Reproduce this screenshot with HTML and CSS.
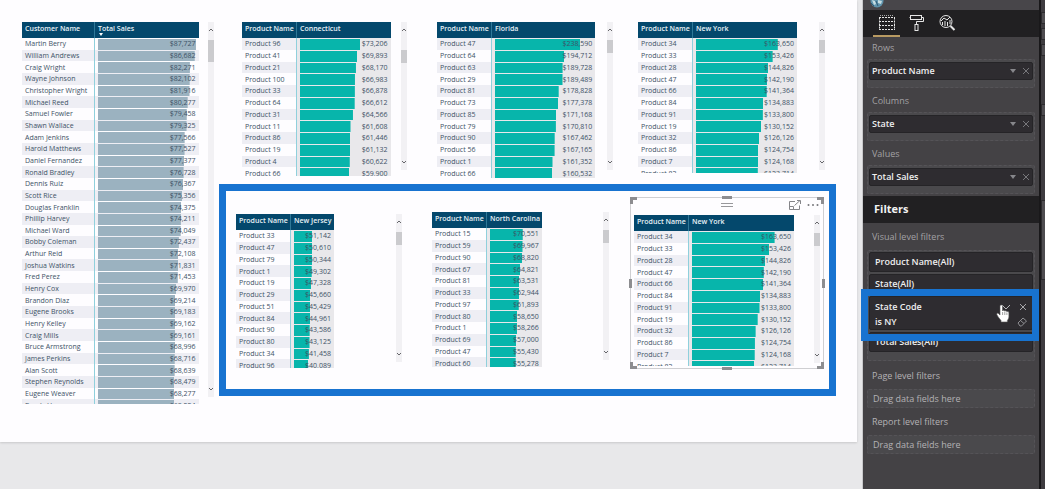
FILE: index.html
```html
<!DOCTYPE html>
<html lang="en">
<head>
<meta charset="utf-8">
<title>Sales report</title>
<link rel="stylesheet" href="styles.css">
</head>
<body>
<main class="report">
  <div class="canvas">
    <section class="visual visual-customers" data-visual="customers"></section>
    <div class="states">
      <div class="state-row state-row-top">
        <section class="visual visual-ct" data-visual="connecticut"></section>
        <section class="visual visual-fl" data-visual="florida"></section>
        <section class="visual visual-ny" data-visual="newYork"></section>
      </div>
      <div class="state-row state-row-marked">
        <section class="visual visual-nj" data-visual="newJersey"></section>
        <section class="visual visual-nc" data-visual="northCarolina"></section>
        <div class="selected">
          <i class="handle h-tl"></i><i class="handle h-tc"></i><i class="handle h-tr"></i>
          <i class="handle h-ml"></i><i class="handle h-mr"></i>
          <i class="handle h-bl"></i><i class="handle h-bc"></i><i class="handle h-br"></i>
          <div class="selected-bar">
            <i class="grip"></i>
            <button class="icon-button" aria-label="Focus mode"><svg width="12" height="10" viewBox="0 0 12 10" fill="none" stroke="#858589"><path d="M6 1.500H.5v8h10V5.500M.5 6.500h4v3M5.500 5.500l5.500-5M8 .5h3.500V4"/></svg></button>
            <button class="icon-button" aria-label="More options"><svg width="12" height="10" viewBox="0 0 12 10" fill="#77777b"><circle cx="1.500" cy="5" r="1"/><circle cx="6" cy="5" r="1"/><circle cx="10.500" cy="5" r="1"/></svg></button>
          </div>
          <section class="visual visual-ny2" data-visual="newYork"></section>
        </div>
      </div>
    </div>
  </div>
</main>

<aside class="pane">
  <div class="pane-top">
    <svg width="18" height="10" viewBox="0 0 18 10"><circle cx="9" cy="1" r="6.500" fill="#5f93ac"/><path d="M4 0l3 1 1 3-2 1zM10 0l4 1-1 3-3-1z" fill="#c7dde2"/><path d="M3 3l3 3M8 1l2 5" stroke="#2d5b78"/></svg>
  </div>
  <nav class="tabs">
    <button class="tab tab-active" aria-label="Fields"><svg width="18" height="18" viewBox="0 0 18 18" fill="none" stroke="#e6e6e6"><path d="M1.500 3.500v12M16.500 3.500v12M1 3.500h16M1 7.500h16M1 11.500h16M1 15.500h16" stroke-dasharray="2 1"/><path d="M2 1.500h13" stroke="#aaa" stroke-dasharray="1 1"/></svg></button>
    <button class="tab" aria-label="Format"><svg width="18" height="18" viewBox="0 0 18 18" fill="none" stroke="#e6e6e6"><rect x="2.500" y="1.500" width="11" height="4"/><path d="M13.500 3.500h2v4H8.500v3M2.500 3.500h-1"/><rect x="7" y="10.500" width="3" height="6"/></svg></button>
    <button class="tab" aria-label="Analytics"><svg width="18" height="18" viewBox="0 0 18 18" fill="none" stroke="#e6e6e6"><circle cx="8" cy="7.500" r="6"/><path d="M12.500 12l4 4" stroke-width="2"/><path d="M4.500 8v3M7 7v5M9.500 8v4M12 6v4M3 7l3-3 3 2 3-3"/></svg></button>
  </nav>

  <h3 class="label">Rows</h3>
  <div class="well"><div class="field"><span>Product Name</span><button class="icon-button" aria-label="Product Name options"><svg width="8" height="6" viewBox="0 0 8 6"><path d="M1 1h6L4 5z" fill="#87878b"/></svg></button><button class="icon-button" aria-label="Remove Product Name"><svg width="8" height="8" viewBox="0 0 8 8" stroke="#77777b"><path d="M1 1l6 6M7 1L1 7"/></svg></button></div></div>
  <h3 class="label">Columns</h3>
  <div class="well"><div class="field"><span>State</span><button class="icon-button" aria-label="State options"><svg width="8" height="6" viewBox="0 0 8 6"><path d="M1 1h6L4 5z" fill="#87878b"/></svg></button><button class="icon-button" aria-label="Remove State"><svg width="8" height="8" viewBox="0 0 8 8" stroke="#77777b"><path d="M1 1l6 6M7 1L1 7"/></svg></button></div></div>
  <h3 class="label">Values</h3>
  <div class="well"><div class="field"><span>Total Sales</span><button class="icon-button" aria-label="Total Sales options"><svg width="8" height="6" viewBox="0 0 8 6"><path d="M1 1h6L4 5z" fill="#87878b"/></svg></button><button class="icon-button" aria-label="Remove Total Sales"><svg width="8" height="8" viewBox="0 0 8 8" stroke="#77777b"><path d="M1 1l6 6M7 1L1 7"/></svg></button></div></div>

  <h2 class="band">Filters</h2>
  <h3 class="label">Visual level filters</h3>
  <div class="well well-filters">
    <div class="field field-filter">Product Name(All)</div>
    <div class="field field-filter">State(All)</div>
    <div class="field field-open">
      <div class="filter-line"><span>State Code</span><button class="icon-button" aria-label="Expand State Code"><svg width="10" height="8" viewBox="0 0 10 8" fill="none" stroke="#b5b5b8"><path d="M1 2l4 4 4-4"/></svg></button><button class="icon-button" aria-label="Remove State Code"><svg width="8" height="8" viewBox="0 0 8 8" stroke="#a5a5a8"><path d="M1 1l6 6M7 1L1 7"/></svg></button></div>
      <div class="filter-line"><span>is NY</span><button class="icon-button" aria-label="Clear filter"><svg width="10" height="10" viewBox="0 0 10 10" fill="none" stroke="#8f8f93"><path d="M1 6l5-5 3.500 3L4.500 9H3zM3.500 3.500l3.500 3"/></svg></button></div>
      <i class="marker"></i>
      <svg class="cursor" width="14" height="19" viewBox="0 0 14 19"><path d="M4 2c0-1.500 2.500-1.500 2.500 0v5c.5-1 2-.8 2.300.2.600-.8 1.900-.5 2.100.5.700-.7 2-.2 2 1V13c0 1.500-1 2.500-1.500 3.500v1.500H5v-1.500C4 15 1.500 12.500.8 10.500c-.3-1.400 1.200-1.800 2-.8L4 11z" fill="#fff" stroke="#555" stroke-width=".6"/><path d="M6.600 8v3M8.800 8v3M10.900 8.500V11" stroke="#777" stroke-width=".7"/></svg>
    </div>
    <div class="field field-filter">Total Sales(All)</div>
  </div>
  <h3 class="label label-low">Page level filters</h3>
  <div class="drop">Drag data fields here</div>
  <h3 class="label label-low">Report level filters</h3>
  <div class="drop">Drag data fields here</div>
</aside>
<div class="next-pane"><i></i><i></i><i></i><i></i><i></i></div>
<script src="script.js"></script>
</body>
</html>
```

FILE: styles.css
```css
* { box-sizing: border-box; }
body {
  margin: 0;
  min-height: 100vh;
  display: flex;
  background: #e8e8ea;
  font-family: "Open Sans", "Noto Sans", sans-serif;
}
h2, h3 { margin: 0; font-weight: 400; }
svg { display: block; }
.icon-button, .tab { border: 0; padding: 0; background: none; display: flex; align-items: center; justify-content: center; }

/* Report canvas */
.report { flex: 1; min-width: 0; padding-right: 5px; border-right: 1px solid #c9c9cb; }
.canvas {
  display: flex;
  gap: 5px;
  padding: 22px 21px 46px 22px;
  background: #fefdff;
  box-shadow: 0 1px 2px #c8c8ca;
}
.visual-customers { flex: 192; height: 374px; }
.states { flex: 617; min-width: 0; }
.state-row { display: grid; }
.state-row-top { grid-template-columns: 195fr 201fr 198fr; padding-left: 23px; height: 162px; align-items: start; }
.state-row-marked { grid-template-columns: 196fr 198fr 194fr; padding: 6px 5px 20px 10px; border: 7px solid #1873d0; align-items: start; }

/* Matrix visual: table plus scroll bar */
.visual { display: flex; justify-content: space-between; min-width: 0; }
.viewport { width: 90%; height: 154px; overflow: hidden; }
.visual-customers .viewport { width: 92%; height: 382px; }
.visual-ct { padding-right: 30px; }
.visual-fl { padding-right: 25px; }
.visual-fl .viewport { height: 156px; }
.visual-ny { padding-right: 11px; }
.visual-ny .viewport { width: 85%; height: 151px; }
.visual-nj { padding: 17px 30px 0 0; }
.visual-nj .viewport { width: 59%; }
.visual-nc { padding: 15px 21px 0 0; }
.visual-nc .viewport { width: 62%; height: 155px; }
.visual-ny2 { padding: 0 3px; }
.visual-ny2 .viewport { width: 86%; height: 151px; }

.matrix { width: 100%; height: 157px; table-layout: fixed; border-collapse: separate; border-spacing: 0; font-size: 7px; line-height: 9px; color: #3d5266; white-space: nowrap; }
.visual-customers .matrix { height: 389px; }
.name-col { width: 54px; }
.visual-customers .name-col { width: 72px; }
.matrix th { height: 16px; padding: 2px 3px 4px; background: #04486c; color: #e9f2f7; font-weight: 600; text-align: left; vertical-align: top; position: relative; }
.matrix th + th { border-left: 1px solid #2f7898; }
.sort { position: absolute; left: 4px; bottom: 2px; border: 2px solid transparent; border-top: 3px solid #fff; border-bottom: 0; }
.matrix td { height: 11px; padding: 0 3px; }
.stripe-odd tbody tr:nth-child(odd), .stripe-even tbody tr:nth-child(even) { background: #eeeef4; }
.matrix td.value {
  padding: 0 0 0 3px;
  border-left: 1px solid #8fd0dc;
  text-align: right;
  background-image: linear-gradient(#07b5ab, #07b5ab);
  background-repeat: no-repeat;
  background-origin: content-box;
  background-position: left bottom;
  background-size: var(--share) calc(100% - 1px);
  background-color: #e9e8eb;
}
.value span { padding-right: 3px; }
.visual-customers td.value { background-image: linear-gradient(#9bb2c0, #9bb2c0); background-color: transparent; }

.scroll { width: 6px; height: 148px; display: flex; flex-direction: column; align-items: center; padding: 6px 0; background: #f2f1f4; }
.visual-customers .scroll { height: 375px; }
.scroll .thumb { width: 6px; height: 13px; margin-top: 8px; margin-bottom: auto; background: #cbcbce; }
.visual-customers .thumb { height: 22px; }
.visual-ct .thumb { margin-top: 18px; }

/* Selected visual frame */
.selected { position: relative; border: 1px solid #cfcfd2; padding-bottom: 2px; }
.selected-bar { position: relative; display: flex; justify-content: flex-end; gap: 6px; height: 17px; padding: 1px 4px 4px 0; }
.grip { position: absolute; left: calc(50% - 6px); top: 5px; width: 12px; height: 4px; border-top: 1px solid #98989b; border-bottom: 1px solid #98989b; }
.handle { position: absolute; border: 0 solid #8d8d90; }
.h-tl, .h-tr, .h-bl, .h-br { width: 7px; height: 7px; }
.h-tl { left: -1px; top: -1px; border-width: 3px 0 0 3px; }
.h-tr { right: -1px; top: -1px; border-width: 3px 3px 0 0; }
.h-bl { left: -1px; bottom: -1px; border-width: 0 0 3px 3px; }
.h-br { right: -1px; bottom: -1px; border-width: 0 3px 3px 0; }
.h-tc, .h-bc { left: calc(50% - 5px); width: 10px; border-top-width: 3px; }
.h-tc { top: -2px; }
.h-bc { bottom: -2px; }
.h-ml, .h-mr { top: calc(50% - 4px); height: 9px; border-left-width: 3px; }
.h-ml { left: -2px; }
.h-mr { right: -2px; }

/* Fields and filters pane */
.pane { width: 176px; background: #444245; color: #e8e8e8; font-size: 9px; line-height: 12px; }
.pane-top { height: 10px; padding-left: 5px; overflow: hidden; background: #48464a; }
.tabs { display: flex; gap: 3px; height: 27px; padding: 0 10px; background: #212022; }
.tab { width: 27px; height: 27px; border-bottom: 2px solid transparent; }
.tab-active { border-bottom-color: #b89a62; }
.label { height: 22px; padding: 5px 9px; color: #a3a1a4; font-size: 9px; line-height: 12px; }
.label-low { height: 26px; padding-top: 7px; color: #b4b2b5; }
.well { margin: 0 4px 2px; padding: 2px 1px 7px; border: 1px dashed #555357; background: #4a494c; border-radius: 2px; }
.field { display: flex; align-items: center; gap: 5px; height: 18px; padding: 0 2px; background: #2e2c30; border: 1px solid #252427; border-radius: 2px; font-weight: 600; color: #efefef; }
.field span { flex: 1; }
.band { height: 27px; padding: 5px 11px; background: #212022; color: #f2f2f2; font-size: 11px; line-height: 16px; font-weight: 700; }
.band + .label { height: 27px; padding-top: 8px; }
.well-filters { display: flex; flex-direction: column; gap: 2px; padding: 1px 1px 8px; }
.field-filter { height: 20px; padding: 0 5px; }
.field-open { position: relative; display: block; height: 34px; padding: 2px 5px; }
.filter-line { display: flex; align-items: center; gap: 8px; height: 15px; }
.marker { position: absolute; inset: -8px -7px -12px -9px; border: 7px solid #1873d0; z-index: 1; }
.cursor { position: absolute; right: 22px; top: 7px; z-index: 2; }
.drop { height: 19px; margin: 0 4px; padding: 3px 5px; border: 1px dashed #555357; background: #4a494c; color: #b4b2b5; border-radius: 2px; line-height: 12px; }
.drop + .label-low { height: 27px; padding-top: 8px; }

.next-pane { width: 6px; border-left: 2px solid #19181a; background: #3e3c40; padding-top: 12px; display: flex; flex-direction: column; gap: 4px; }
.next-pane i { height: 12px; background: #4e4c50; border: 1px solid #2c2b2e; border-right: 0; }
.next-pane i:nth-child(4) { margin-top: 44px; }
.next-pane i:nth-child(5) { height: 80px; margin-top: 80px; }
```

FILE: script.js
```js
// Each visual: column titles, bar length of the largest value (% of the column), stripe phase, rows.
const products = text => text.split(" ").map(pair => {
  const [id, value] = pair.split(":");
  return ["Product " + id, Number(value)];
});

const visuals = {
  customers: {
    titles: ["Customer Name", "Total Sales"], full: 97, stripe: "even", sorted: true,
    rows: [
      ["Martin Berry", 87727], ["William Andrews", 86682], ["Craig Wright", 82271], ["Wayne Johnson", 82102],
      ["Christopher Wright", 81916], ["Michael Reed", 80277], ["Samuel Fowler", 79458], ["Shawn Wallace", 79325],
      ["Adam Jenkins", 77566], ["Harold Matthews", 77527], ["Daniel Fernandez", 77377], ["Ronald Bradley", 76728],
      ["Dennis Ruiz", 76367], ["Scott Rice", 75356], ["Douglas Franklin", 74375], ["Phillip Harvey", 74211],
      ["Michael Ward", 74049], ["Bobby Coleman", 72437], ["Arthur Reid", 72108], ["Joshua Watkins", 71831],
      ["Fred Perez", 71453], ["Henry Cox", 69970], ["Brandon Diaz", 69214], ["Eugene Brooks", 69183],
      ["Henry Kelley", 69162], ["Craig Mills", 69161], ["Bruce Armstrong", 68996], ["James Perkins", 68716],
      ["Alan Scott", 68639], ["Stephen Reynolds", 68479], ["Eugene Weaver", 68277], ["Randy Hayes", 68224]
    ]
  },
  connecticut: {
    titles: ["Product Name", "Connecticut"], full: 66, stripe: "odd",
    rows: products("96:73206 41:69893 21:68170 100:66983 33:66878 64:66612 31:64566 11:61608 86:61446 19:61132 4:60622 66:59900")
  },
  florida: {
    titles: ["Product Name", "Florida"], full: 85, stripe: "odd",
    rows: products("47:238590 64:194712 63:189728 29:189489 81:178828 73:177378 85:171168 79:170810 90:167462 56:167165 1:161352 66:160532")
  },
  newYork: {
    titles: ["Product Name", "New York"], full: 81, stripe: "odd",
    rows: products("34:163650 33:153426 28:144826 47:142190 66:141364 84:134883 91:133800 19:130152 32:126126 86:124754 7:124168 82:123714")
  },
  newJersey: {
    titles: ["Product Name", "New Jersey"], full: 46, stripe: "even",
    rows: products("33:51142 47:50610 79:50344 1:49302 19:47328 29:45660 51:45429 84:44961 90:43586 80:43125 34:41458 96:40089")
  },
  northCarolina: {
    titles: ["Product Name", "North Carolina"], full: 63, stripe: "even",
    rows: products("15:70551 59:69967 90:68820 67:64821 81:63531 33:62944 97:61893 80:58650 1:58266 69:57000 47:55430 60:55278")
  }
};

const arrow = path => `<svg width="6" height="4" viewBox="0 0 6 4" fill="none" stroke="#66666a"><path d="${path}"/></svg>`;

for (const host of document.querySelectorAll("[data-visual]")) {
  const { titles, full, stripe, sorted, rows } = visuals[host.dataset.visual];
  const max = rows[0][1];
  const body = rows.map(([name, value]) =>
    `<tr><td>${name}</td><td class="value" style="--share:${(value / max * full).toFixed(1)}%"><span>$${value.toLocaleString("en-US")}</span></td></tr>`
  ).join("");
  host.innerHTML = `
    <div class="viewport"><table class="matrix stripe-${stripe}">
      <colgroup><col class="name-col"><col></colgroup>
      <thead><tr><th>${titles[0]}</th><th>${titles[1]}${sorted ? '<i class="sort"></i>' : ""}</th></tr></thead>
      <tbody>${body}</tbody>
    </table></div>
    <div class="scroll">${arrow("M1 3l2-2 2 2")}<i class="thumb"></i>${arrow("M1 1l2 2 2-2")}</div>`;
}
```
